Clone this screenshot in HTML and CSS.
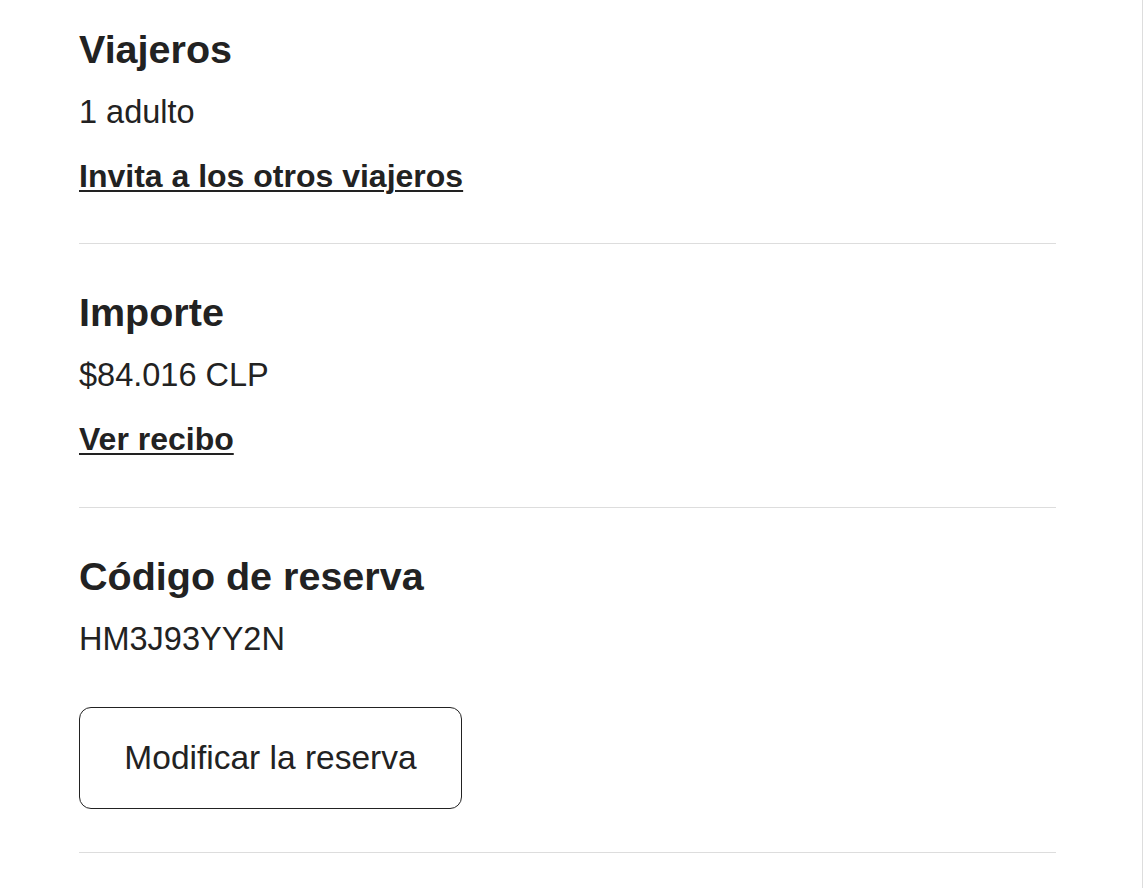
FILE: index.html
```html
<!DOCTYPE html>
<html lang="es">
  <head>
    <meta charset="UTF-8">
    <meta name="viewport" content="width=device-width, initial-scale=1.0">
    <title>Detalles de la reserva</title>
    <link rel="stylesheet" href="styles.css">
  </head>
  <body>
    <div class="page">
      <main class="details">
        <section class="block block-first">
          <h2>Viajeros</h2>
          <p>1 adulto</p>
          <a href="#" class="link">Invita a los otros viajeros</a>
        </section>
        <section class="block">
          <h2>Importe</h2>
          <p>$84.016 CLP</p>
          <a href="#" class="link">Ver recibo</a>
        </section>
        <section class="block">
          <h2>Código de reserva</h2>
          <p>HM3J93YY2N</p>
          <button class="outline-btn" type="button">Modificar la reserva</button>
        </section>
      </main>
    </div>
  </body>
</html>
```

FILE: styles.css
```css
body {
  margin: 0;
  background: #ffffff;
  color: #222222;
  font-family: "Liberation Sans", Arial, sans-serif;
}

.page {
  width: 1142px;
  min-height: 100vh;
  border-right: 1px solid #dddddd;
  background: #ffffff;
}

.details {
  padding-left: 79px;
  width: 977px;
}

.block {
  display: flex;
  flex-direction: column;
  align-items: flex-start;
  padding: 44px 0 43px;
  border-bottom: 1px solid #dddddd;
}

.block:nth-child(2) {
  padding-bottom: 44px;
}

.block-first {
  padding-top: 25px;
}

h2 {
  margin: 0;
  font-size: 39.5px;
  line-height: 48px;
  font-weight: bold;
}

p {
  margin: 19px 0 0;
  font-size: 32.5px;
  line-height: 40px;
}

.link {
  margin-top: 20px;
  font-size: 32px;
  line-height: 48px;
  font-weight: bold;
  color: #222222;
  text-decoration: underline;
  text-decoration-thickness: 2px;
  text-underline-offset: 3px;
}

.outline-btn {
  margin-top: 48px;
  width: 383px;
  height: 102px;
  padding: 0;
  background: #ffffff;
  border: 1px solid #222222;
  border-radius: 12px;
  font-family: inherit;
  font-size: 33.5px;
  color: #222222;
  cursor: pointer;
}
```
